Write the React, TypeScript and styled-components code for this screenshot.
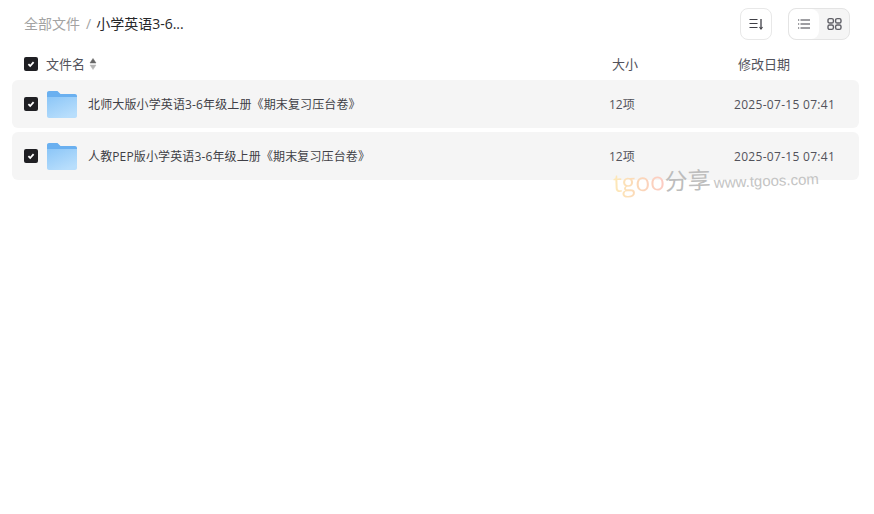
import styled, { createGlobalStyle } from "styled-components";

const Global = createGlobalStyle`
	html, body { margin: 0; padding: 0; background: #fff; }
	body { font-family: "Open Sans", "Noto Sans CJK SC", sans-serif; }
`;

const Page = styled.div`
	position: relative;
	width: 874px;
	height: 514px;
	overflow: hidden;
	padding: 8px 15px 0 12px;
	box-sizing: border-box;
`;

const TopBar = styled.div`
	display: flex;
	align-items: center;
	height: 32px;
	padding: 0 9px 0 12px;
`;

const Crumbs = styled.div`
	display: flex;
	align-items: center;
	flex: 1;
	font-size: 14px;
	line-height: 32px;
`;

const CrumbLink = styled.span`
	color: #a3a3a3;
`;

const CrumbSep = styled.span`
	color: #a3a3a3;
	margin: 0 5px 0 6px;
`;

const CrumbCurrent = styled.span`
	color: #27272a;
`;

const IconButton = styled.div`
	display: flex;
	align-items: center;
	justify-content: center;
	width: 32px;
	height: 32px;
	box-sizing: border-box;
	border: 1px solid #e8e8e8;
	border-radius: 8px;
	margin-right: 16px;
`;

const Toggle = styled.div`
	display: flex;
	width: 62px;
	height: 32px;
	box-sizing: border-box;
	border: 1px solid #e4e4e4;
	border-radius: 8px;
	background: #f5f5f5;
	overflow: hidden;
`;

const ToggleItem = styled.div<{ $active?: boolean }>`
	display: flex;
	align-items: center;
	justify-content: center;
	width: 30px;
	background: ${(p) => (p.$active ? "#fff" : "transparent")};
	border-radius: ${(p) => (p.$active ? "8px" : "0")};
`;

const HeaderRow = styled.div`
	display: flex;
	align-items: center;
	height: 33px;
	padding: 7px 0 0 12px;
	font-size: 13px;
	color: #52525b;
`;

const Check = styled.span`
	display: flex;
	align-items: center;
	justify-content: center;
	flex: none;
	width: 14px;
	height: 14px;
	border-radius: 2px;
	background: #1f1f23;
`;

const HeaderName = styled.div`
	display: flex;
	align-items: center;
	gap: 4px;
	width: 566px;
	margin-left: 8px;
`;

const HeaderSize = styled.div`
	width: 126px;
`;

const Rows = styled.div`
	display: flex;
	flex-direction: column;
	gap: 4px;
`;

const Row = styled.div`
	display: flex;
	align-items: center;
	height: 48px;
	width: 847px;
	padding-left: 12px;
	box-sizing: border-box;
	background: #f5f5f5;
	border-radius: 6px;
	font-size: 12px;
`;

const FolderWrap = styled.div`
	display: flex;
	flex: none;
	margin: 1px 11px 0 9px;
`;

const Name = styled.div`
	width: 521px;
	letter-spacing: 0.13px;
	color: #3f3f46;
`;

const Size = styled.div`
	width: 125px;
	color: #52525b;
`;

const Modified = styled.div`
	letter-spacing: 0.3px;
	color: #52525b;
`;

const Watermark = styled.div`
	position: absolute;
	left: 613px;
	top: 165px;
	display: flex;
	align-items: baseline;
	transform: rotate(-2.2deg);
	transform-origin: left center;
	white-space: nowrap;
`;

const MarkBrand = styled.span`
	font-family: "Open Sans", sans-serif;
	font-size: 25px;
	letter-spacing: -0.2px;
	background: linear-gradient(90deg, #fde9b8, #fbd7b8 50%, #fccbc4);
	-webkit-background-clip: text;
	background-clip: text;
	color: transparent;
`;

const MarkCn = styled.span`
	font-size: 23px;
	color: #bdbdbd;
`;

const MarkUrl = styled.span`
	font-family: "Liberation Sans", sans-serif;
	font-size: 15px;
	color: #c4c4c4;
	margin-left: 3px;
`;

const Tick = () => (
	<svg width="10" height="10" viewBox="0 0 10 10" fill="none">
		<path d="M2.4 5.2L4.2 7L7.6 3.2" stroke="#fff" strokeWidth="1.8" />
	</svg>
);

const SortCarets = () => (
	<svg width="8" height="12" viewBox="0 0 8 12">
		<path d="M4 .5L7 5H1Z" fill="#666" stroke="#666" strokeLinejoin="round" strokeWidth=".5" />
		<path d="M4 11.5L1 7H7Z" fill="#b4b4b4" stroke="#b4b4b4" strokeLinejoin="round" strokeWidth=".5" />
	</svg>
);

const SortIcon = () => (
	<svg width="16" height="16" viewBox="0 0 16 16" fill="none" stroke="#3f3f46" strokeWidth="1.1">
		<path d="M1.5 3.5H9.5M1.5 7.5H9.5M1.5 11.5H9.5" />
		<path d="M13 3V12.5" strokeWidth="1.3" />
		<path d="M11.5 11L13 13L14.5 11" />
	</svg>
);

const ListIcon = () => (
	<svg width="14" height="14" viewBox="0 0 14 14" fill="none" stroke="#3f3f46" strokeWidth="1.1">
		<path d="M3.5 3H13M3.5 7H13M3.5 11H13" />
		<path d="M1 3H2.2M1 7H2.2M1 11H2.2" />
	</svg>
);

const GridIcon = () => (
	<svg width="15" height="14" viewBox="0 0 15 14" fill="none" stroke="#5f5f66" strokeWidth="1.4">
		<rect x="1" y="1.6" width="5.4" height="4.4" rx="1.6" />
		<rect x="8.6" y="1.6" width="5.4" height="4.4" rx="1.6" />
		<rect x="1" y="8" width="5.4" height="4.4" rx="1.6" />
		<rect x="8.6" y="8" width="5.4" height="4.4" rx="1.6" />
	</svg>
);

const FolderIcon = () => (
	<svg width="30" height="27" viewBox="0 0 30 27">
		<defs>
			<linearGradient id="folderFront" x1="0" y1="0" x2="0.6" y2="1">
				<stop offset="0" stopColor="#8cc6f7" />
				<stop offset="1" stopColor="#b8defc" />
			</linearGradient>
		</defs>
		<path d="M0 2C0 .9.9 0 2 0H10.5L13.5 3H28C29.1 3 30 3.9 30 5V10H0Z" fill="#6ab0f0" />
		<path d="M0 6H30V25C30 26.1 29.1 27 28 27H2C.9 27 0 26.1 0 25Z" fill="url(#folderFront)" />
	</svg>
);

const rows = [
	"北师大版小学英语3-6年级上册《期末复习压台卷》",
	"人教PEP版小学英语3-6年级上册《期末复习压台卷》",
];

export default function App() {
	return (
		<Page>
			<Global />
			<TopBar>
				<Crumbs>
					<CrumbLink>全部文件</CrumbLink>
					<CrumbSep>/</CrumbSep>
					<CrumbCurrent>小学英语3-6...</CrumbCurrent>
				</Crumbs>
				<IconButton>
					<SortIcon />
				</IconButton>
				<Toggle>
					<ToggleItem $active>
						<ListIcon />
					</ToggleItem>
					<ToggleItem>
						<GridIcon />
					</ToggleItem>
				</Toggle>
			</TopBar>
			<HeaderRow>
				<Check>
					<Tick />
				</Check>
				<HeaderName>
					文件名
					<SortCarets />
				</HeaderName>
				<HeaderSize>大小</HeaderSize>
				<div>修改日期</div>
			</HeaderRow>
			<Rows>
				{rows.map((name) => (
					<Row key={name}>
						<Check>
							<Tick />
						</Check>
						<FolderWrap>
							<FolderIcon />
						</FolderWrap>
						<Name>{name}</Name>
						<Size>12项</Size>
						<Modified>2025-07-15 07:41</Modified>
					</Row>
				))}
			</Rows>
			<Watermark>
				<MarkBrand>tgoo</MarkBrand>
				<MarkCn>分享</MarkCn>
				<MarkUrl>www.tgoos.com</MarkUrl>
			</Watermark>
		</Page>
	);
}
